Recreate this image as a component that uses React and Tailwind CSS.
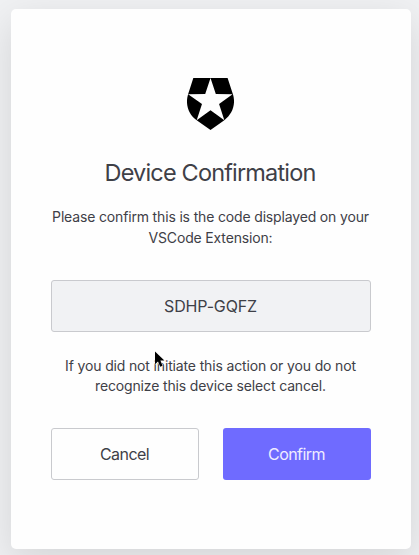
function Shield() {
  return (
    <svg className="mr-px mt-[69px] h-[52px] w-[47px] shrink-0" viewBox="1.53 0 20.94 24" preserveAspectRatio="none" fill="#000">
      <path d="M21.98 7.448L19.62 0H4.347L2.02 7.448c-1.352 4.312.03 9.206 3.815 12.015L12.007 24l6.157-4.552c3.755-2.81 5.182-7.688 3.815-12.015l-6.16 4.58 2.343 7.45-6.157-4.597-6.158 4.58 2.358-7.433-6.188-4.55 7.63-.045L12.008 0l2.356 7.404 7.615.044z" />
    </svg>
  );
}

function Pointer() {
  return (
    <svg className="absolute left-[154px] top-[350px] h-[19px] w-[13px]" viewBox="0 0 13 19">
      <path d="M1 1.5V14.2L4 11.4L6.2 16.8L8.6 15.8L6.4 10.6H10.4Z" fill="#000" stroke="#fff" strokeWidth="1" paintOrder="stroke" />
    </svg>
  );
}

export default function App() {
  return (
    <div className="relative h-[555px] w-[419px] overflow-hidden bg-[#f0f1f3] pl-[11px] pt-[9px] font-['Inter',sans-serif] text-[#3e4047]">
      <main className="flex h-[540px] w-[400px] flex-col items-center rounded-[5px] bg-[#fefefe] px-10 text-center shadow-[0_12px_40px_rgba(0,0,0,0.12)]">
        <Shield />
        <h1 className="mt-[27px] whitespace-nowrap pr-[2px] text-[23.5px] font-normal leading-[32px] tracking-[-0.83px]">Device Confirmation</h1>
        <p className="mt-[17px] whitespace-nowrap pr-px text-[14px] leading-[21px] tracking-[-0.16px]">
          Please confirm this is the code displayed on your
          <br />
          VSCode Extension:
        </p>
        <div className="mt-[32px] flex h-[52px] w-full shrink-0 items-center justify-center rounded-[3px] border border-[#c9cace] bg-[#f1f2f4] pr-px text-[16px] tracking-[-0.15px]">
          SDHP-GQFZ
        </div>
        <p className="mt-[24px] whitespace-nowrap pr-px text-[14px] leading-[20px] tracking-[-0.15px]">
          If you did not initiate this action or you do not
          <br />
          recognize this device select cancel.
        </p>
        <div className="mt-[32px] grid w-full grid-cols-2 gap-6">
          <button className="h-[52px] rounded-[3px] border border-[#c9cace] pr-px text-[16px] tracking-[-0.55px]">Cancel</button>
          <button className="h-[52px] rounded-[3px] bg-[#6f6bff] pr-px text-[16px] tracking-[-0.55px] text-[#efedff]">Confirm</button>
        </div>
      </main>
      <Pointer />
    </div>
  );
}
